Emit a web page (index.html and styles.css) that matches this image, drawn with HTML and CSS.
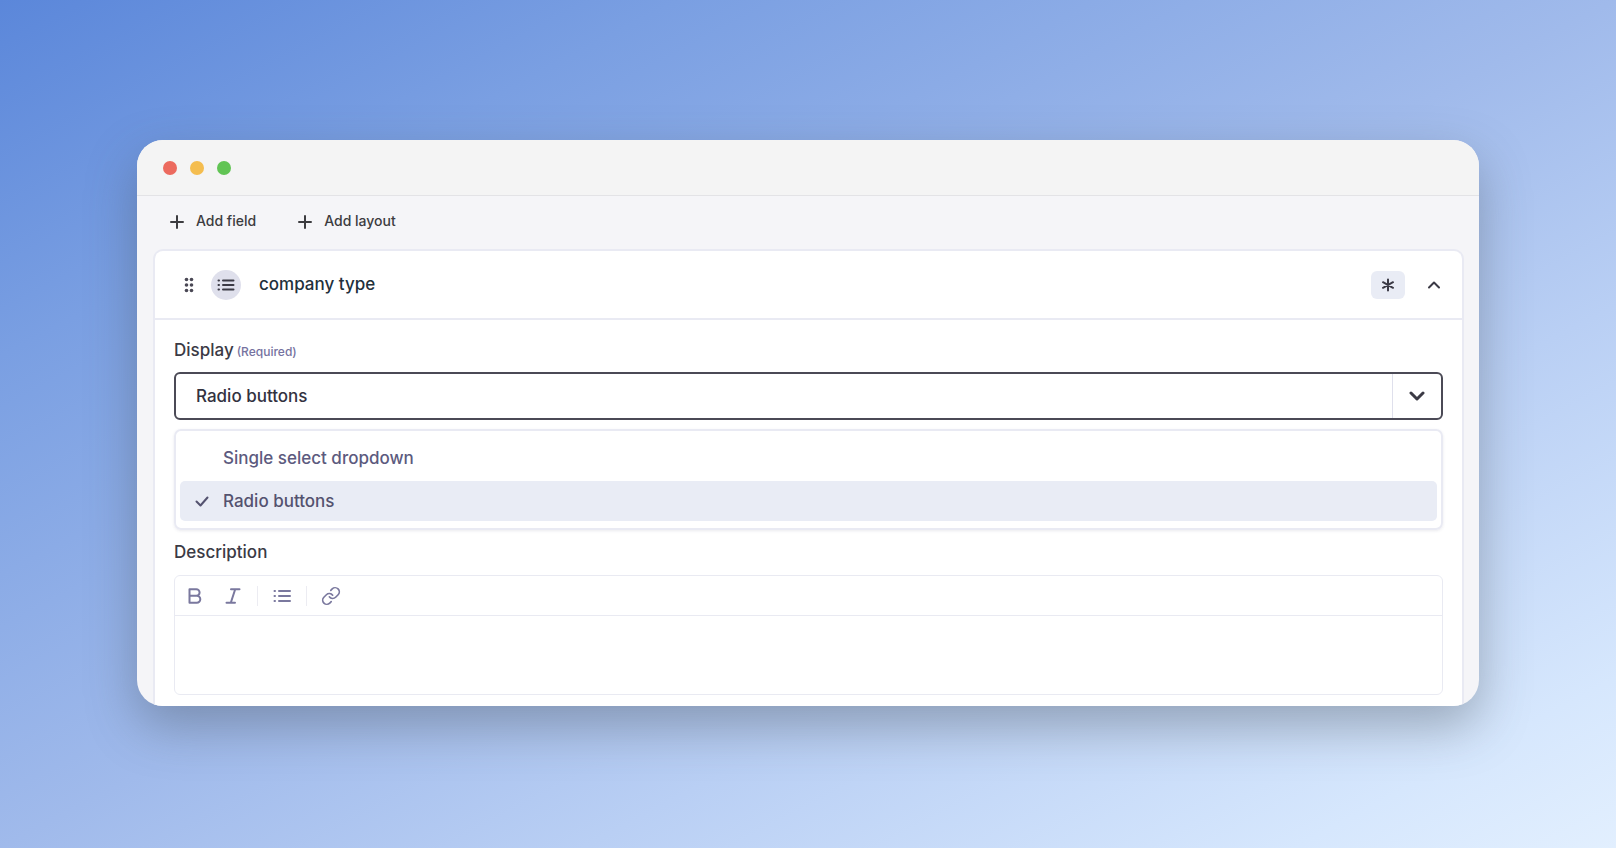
FILE: index.html
```html
<!DOCTYPE html>
<html lang="en">

<head>
	<meta charset="UTF-8">
	<meta name="viewport" content="width=device-width, initial-scale=1.0">
	<title>Form fields</title>
	<link rel="stylesheet" href="styles.css">
</head>

<body>
	<main class="window">
		<div class="titlebar">
			<span class="dot dot-red"></span>
			<span class="dot dot-yellow"></span>
			<span class="dot dot-green"></span>
		</div>

		<div class="content">
			<div class="actions">
				<button type="button" class="add-btn">
					<svg width="14" height="16" viewBox="0 0 14 16"><path d="M7 3v12M1 9h12" /></svg>
					Add field
				</button>
				<button type="button" class="add-btn">
					<svg width="14" height="16" viewBox="0 0 14 16"><path d="M7 3v12M1 9h12" /></svg>
					Add layout
				</button>
			</div>

			<section class="card">
				<header class="card-header">
					<button type="button" class="icon-btn drag" aria-label="Move field">
						<svg width="10" height="16" viewBox="0 0 10 16">
							<circle cx="2.5" cy="2.5" r="1.8" /><circle cx="7.5" cy="2.5" r="1.8" />
							<circle cx="2.5" cy="8" r="1.8" /><circle cx="7.5" cy="8" r="1.8" />
							<circle cx="2.5" cy="13.5" r="1.8" /><circle cx="7.5" cy="13.5" r="1.8" />
						</svg>
					</button>
					<span class="type-icon">
						<svg width="18" height="14" viewBox="0 0 18 14"><path d="M6 2.5h10.5M6 7h10.5M6 11.5h10.5M1.5 2.5h.5M1.5 7h.5M1.5 11.5h.5" /></svg>
					</span>
					<h2 class="card-title">company type</h2>
					<button type="button" class="icon-btn required-btn" aria-label="Required">
						<svg width="14" height="14" viewBox="0 0 14 14"><path d="M7 1.5v11M2 4.2l10 5.6M12 4.2L2 9.8" /></svg>
					</button>
					<button type="button" class="icon-btn collapse" aria-label="Collapse">
						<svg width="14" height="10" viewBox="0 0 14 10"><path d="M2 7.5l5-5 5 5" /></svg>
					</button>
				</header>

				<div class="card-body">
					<label class="label" for="display">Display<small>(Required)</small></label>
					<div class="select">
						<select id="display">
							<option>Single select dropdown</option>
							<option selected>Radio buttons</option>
						</select>
						<span class="select-arrow">
							<svg width="16" height="12" viewBox="0 0 16 12"><path d="M2 3l6 6 6-6" /></svg>
						</span>
					</div>
					<ul class="menu" role="listbox" aria-label="Display">
						<li class="option" role="option" aria-selected="false">Single select dropdown</li>
						<li class="option selected" role="option" aria-selected="true">
							<svg width="14" height="12" viewBox="0 0 14 12"><path d="M1.5 6.500l4 4 7-8" /></svg>
							Radio buttons
						</li>
					</ul>

					<label class="label" for="description">Description</label>
					<div class="editor">
						<div class="editor-bar">
							<button type="button" class="icon-btn" aria-label="Bold">
								<svg width="20" height="20" viewBox="0 0 20 20"><path d="M4.5 3.2h6.8a3.3 3.3 0 0 1 0 6.6H4.5zM4.5 9.8h7.3a3.5 3.5 0 0 1 0 7H4.5z" /></svg>
							</button>
							<button type="button" class="icon-btn" aria-label="Italic">
								<svg width="20" height="20" viewBox="0 0 20 20"><path d="M8 3.2h8.5M3.5 16.8H12M12.2 3.2L7.800 16.8" /></svg>
							</button>
							<span class="sep"></span>
							<button type="button" class="icon-btn" aria-label="Bullet list">
								<svg width="20" height="20" viewBox="0 0 20 20"><path d="M7 5h11M7 10h11M7 15h11M2.500 5h.5M2.500 10h.5M2.500 15h.5" /></svg>
							</button>
							<span class="sep"></span>
							<button type="button" class="icon-btn" aria-label="Link">
								<svg width="20" height="20" viewBox="0 0 24 24"><path d="M10 13a5 5 0 0 0 7.54.54l3-3a5 5 0 0 0-7.07-7.07l-1.72 1.71M14 11a5 5 0 0 0-7.54-.54l-3 3a5 5 0 0 0 7.07 7.07l1.71-1.71" /></svg>
							</button>
						</div>
						<textarea id="description" class="editor-text"></textarea>
					</div>
				</div>
			</section>
		</div>
	</main>
</body>

</html>
```

FILE: styles.css
```css
*,
*::before,
*::after {
	box-sizing: border-box;
}

body {
	margin: 0;
	min-height: 100vh;
	padding: 140px 137px;
	font-family: Inter, "Liberation Sans", sans-serif;
	font-size: 17px;
	font-weight: 500;
	line-height: 24px;
	color: #3b3a45;
	background: linear-gradient(to bottom right, #5b87da 0%, #7a9fe2 21%, #a0baeb 50%, #b9cff4 68%, #d6e7fd 90%, #e2effe 100%);
}

button,
select,
textarea {
	font: inherit;
	color: inherit;
	border: 0;
	padding: 0;
	background: none;
}

svg {
	display: block;
	fill: none;
	stroke: currentColor;
	stroke-linecap: round;
	stroke-linejoin: round;
}

/* window */
.window {
	border-radius: 26px;
	overflow: hidden;
	background: #f5f5f8;
	box-shadow: 0 20px 50px rgba(70, 80, 90, 0.4);
}

.titlebar {
	display: flex;
	align-items: center;
	gap: 13px;
	height: 56px;
	padding: 0 26px;
	background: #f4f4f4;
	border-bottom: 1px solid #e3e3e6;
}

.dot {
	width: 14px;
	height: 14px;
	border-radius: 50%;
}

.dot-red {
	background: #ec6a5e;
}

.dot-yellow {
	background: #f4bd4f;
}

.dot-green {
	background: #61c454;
}

.content {
	padding: 0 15px 0 16px;
}

.actions {
	display: flex;
	gap: 42px;
	height: 53px;
	padding: 0 17px 4px;
	align-items: center;
}

.add-btn {
	display: flex;
	align-items: center;
	gap: 12px;
	font-size: 14px;
	color: #3c3c40;
	cursor: pointer;
}

.add-btn svg {
	stroke-width: 2;
}

/* field card */
.card {
	background: #fff;
	border: 2px solid #e9eaf3;
	border-bottom: 0;
	border-radius: 10px 10px 0 0;
}

.card-header {
	display: flex;
	align-items: center;
	height: 69px;
	padding: 0 21px 0 29px;
	border-bottom: 2px solid #e9eaf3;
}

.icon-btn {
	display: flex;
	align-items: center;
	justify-content: center;
	cursor: pointer;
}

.drag svg {
	fill: #4a4855;
	stroke: none;
}

.type-icon {
	display: flex;
	align-items: center;
	justify-content: center;
	width: 30px;
	height: 30px;
	margin: 0 18px 0 17px;
	border-radius: 50%;
	background: #dfe0ec;
	stroke-width: 2;
}

.card-title {
	flex: 1;
	margin: 0;
	padding-bottom: 2px;
	font-size: 17px;
	font-weight: 500;
	color: #22303b;
}

.required-btn {
	width: 34px;
	height: 28px;
	margin-right: 22px;
	border-radius: 6px;
	background: #e9ecf5;
}

.required-btn svg,
.collapse svg {
	stroke-width: 2;
}

.card-body {
	padding: 18px 19px 11px;
}

.label {
	display: block;
	margin-bottom: 8px;
}

.label small {
	margin-left: 3px;
	font-size: 12px;
	color: #7572a0;
}

.select {
	display: flex;
	height: 48px;
	border: 2px solid #4b4a56;
	border-radius: 6px;
}

.select select {
	flex: 1;
	padding: 0 20px;
	appearance: none;
	outline: 0;
	color: #33323f;
}

.select-arrow {
	display: flex;
	align-items: center;
	justify-content: center;
	width: 49px;
	border-left: 1px solid #dfe0ec;
}

.select-arrow svg {
	stroke-width: 3;
}

.menu {
	margin: 9px 0 10px;
	padding: 7px 4px;
	list-style: none;
	border: 2px solid #e9eaf3;
	border-radius: 7px;
	box-shadow: 0 1px 3px rgba(50, 50, 90, 0.1);
}

.option {
	display: flex;
	align-items: center;
	gap: 14px;
	height: 40px;
	padding-left: 43px;
	border-radius: 5px;
	color: #5c5a7e;
}

.option + .option {
	margin-top: 3px;
}

.option.selected {
	padding-left: 15px;
	color: #54526f;
	background: #e9ecf5;
}

.option svg {
	stroke-width: 2;
}

/* description editor */
.editor {
	margin-top: 11px;
	border: 1px solid #e9eaf2;
	border-radius: 6px;
}

.editor-bar {
	display: flex;
	align-items: center;
	gap: 14px;
	height: 40px;
	padding: 0 10px;
	color: #7a789e;
	border-bottom: 1px solid #e9eaf2;
}

.editor-bar .icon-btn {
	width: 20px;
}

.editor-bar .icon-btn + .icon-btn {
	margin-left: 4px;
}

.editor-bar svg {
	flex: none;
	stroke-width: 2;
}

.sep {
	width: 1px;
	height: 20px;
	background: #ececf2;
}

.editor-text {
	display: block;
	width: 100%;
	height: 78px;
	padding: 12px;
	resize: none;
	outline: 0;
}
```
